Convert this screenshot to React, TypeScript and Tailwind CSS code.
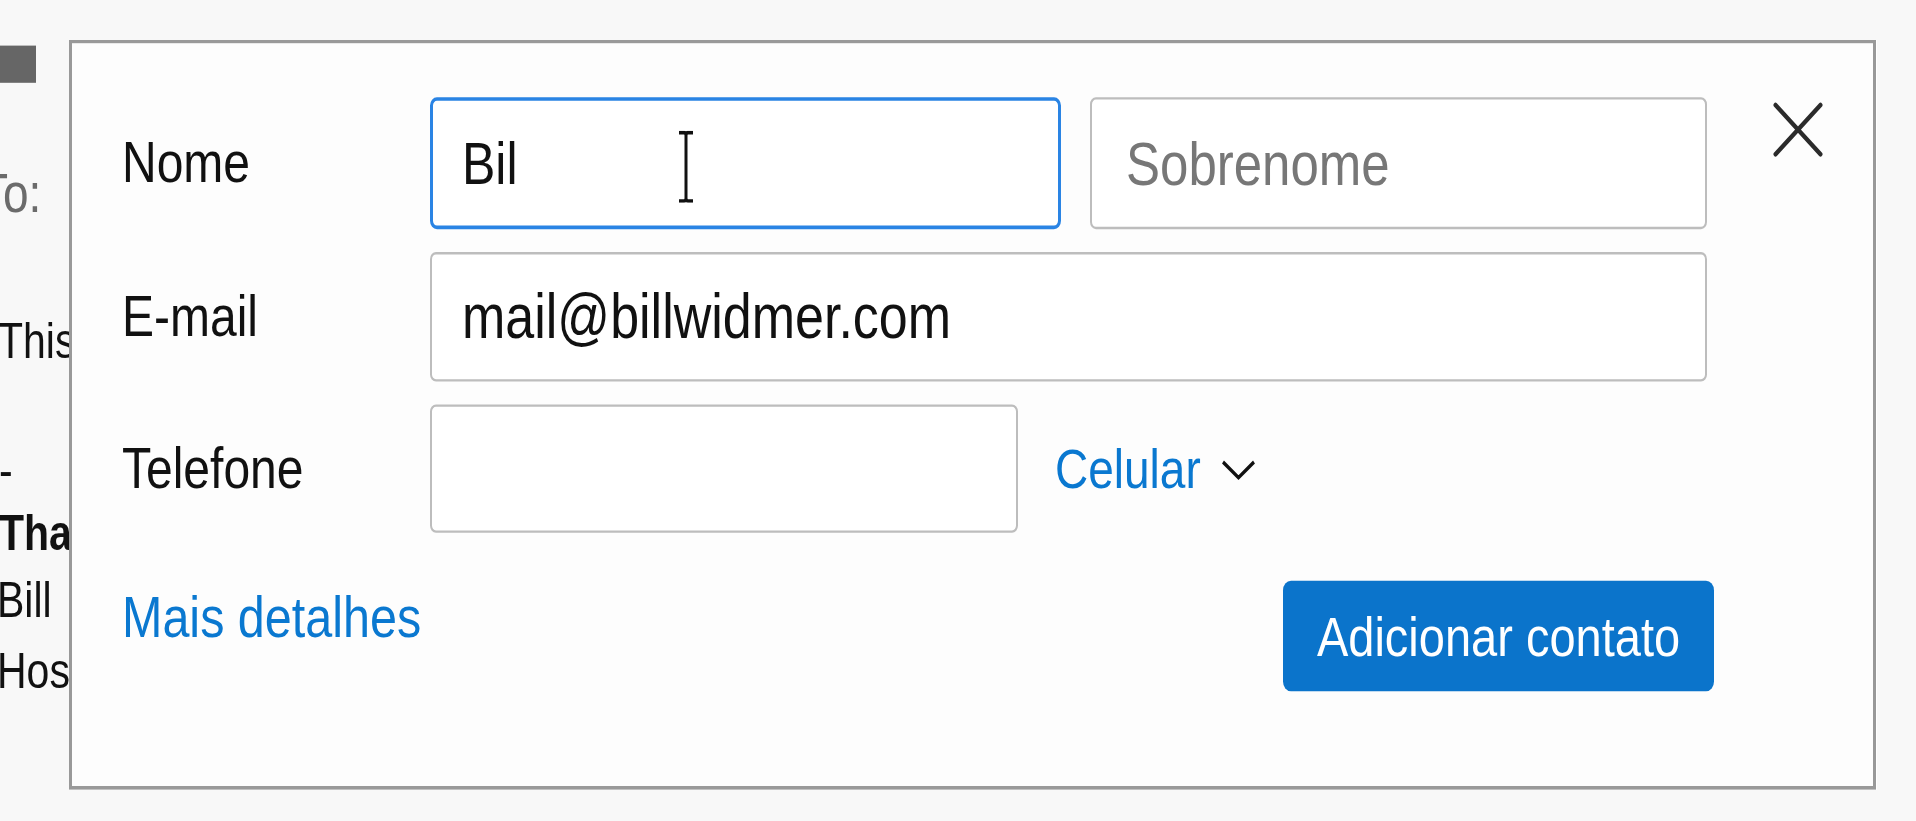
import React from "react";

// the reference is stretched vertically, so the page is laid out in "flat" units and scaled on Y
function CloseIcon() {
    return (
        <svg width="50" height="46" viewBox="0 0 50 46" fill="none">
            <path d="M2.5 2.5 L47.5 43.5 M47.5 2.5 L2.5 43.5" stroke="#2b2b2b" strokeWidth="4" strokeLinecap="round" />
        </svg>
    );
}

function Chevron() {
    return (
        <svg width="35" height="17" viewBox="0 0 35 17" fill="none">
            <polyline points="2,2 17.5,15 33,2" stroke="#111" strokeWidth="3" />
        </svg>
    );
}

function IBeam() {
    return (
        <svg width="16" height="60" viewBox="0 0 16 60" fill="none">
            <path d="M1 1.5 H6 Q8 1.5 8 4 V56 Q8 58.5 10 58.5 H15 M8 4 Q8 1.5 10 1.5 H15 M1 58.5 H6 Q8 58.5 8 56" stroke="#111" strokeWidth="3" />
        </svg>
    );
}

function Label({ children }: { children: React.ReactNode }) {
    return <div className="w-[308px] shrink-0 text-[48px] leading-none text-[#111]">{children}</div>;
}

export default function App() {
    return (
        <div className="w-[1916px] h-[821px] bg-[#f8f8f8] overflow-hidden">
            <div className="w-[1916px] h-[684px] origin-top-left scale-y-[1.2] flex font-['Liberation_Sans',Arial,sans-serif]">
                {/* mail body peeking out behind the popup */}
                <div className="w-[69px] shrink-0 overflow-hidden text-[41px] leading-[56px] text-[#111] whitespace-nowrap">
                    <div className="mt-[38px] w-[36px] h-[31px] bg-[#666]" />
                    <div className="mt-[64px] ml-[-20px] text-[46px] text-[#6b6b6b]">To:</div>
                    <div className="mt-[67px] ml-[-2px]">This is a test</div>
                    <div className="mt-[52px] ml-[-1px]">-</div>
                    <div className="mt-[-4px] ml-[-1px] font-bold">Thanks,</div>
                    <div className="ml-[-3px]">Bill</div>
                    <div className="mt-[3px] ml-[-3px]">Hostinger</div>
                </div>

                <div className="mt-[33px] w-[1807px] h-[625px] shrink-0 border-[3px] border-[#999] bg-[#fdfdfd] pt-[45px] pl-[50px] flex flex-col">
                    <div className="flex items-center h-[110px]">
                        <Label>Nome</Label>
                        <div className="relative w-[631px] h-full shrink-0">
                            <input
                                readOnly
                                defaultValue="Bil"
                                className="w-full h-full rounded-[7px] border-[3px] border-[#2a84e4] bg-white pl-[29px] text-[50px] text-[#111] outline-none"
                            />
                            <div className="absolute left-[248px] top-[28px] pointer-events-none">
                                <IBeam />
                            </div>
                        </div>
                        <input
                            readOnly
                            placeholder="Sobrenome"
                            className="ml-[29px] w-[617px] h-full shrink-0 rounded-[6px] border-2 border-[#bdbdbd] bg-white pl-[34px] text-[51px] text-[#111] placeholder:text-[#777] outline-none"
                        />
                        <button className="ml-[66px] self-start mt-[4px]">
                            <CloseIcon />
                        </button>
                    </div>

                    <div className="flex items-center h-[108px] mt-[19px]">
                        <Label>E-mail</Label>
                        <input
                            readOnly
                            defaultValue="mail@billwidmer.com"
                            className="w-[1277px] h-full shrink-0 rounded-[6px] border-2 border-[#bdbdbd] bg-white pl-[30px] text-[52px] text-[#111] outline-none"
                        />
                    </div>

                    <div className="flex items-center h-[107px] mt-[19px]">
                        <Label>Telefone</Label>
                        <input
                            readOnly
                            className="w-[588px] h-full shrink-0 rounded-[6px] border-2 border-[#bdbdbd] bg-white outline-none"
                        />
                        <span className="ml-[37px] text-[46px] leading-none text-[#0a78d0]">Celular</span>
                        <span className="ml-[20px] mt-[2px]">
                            <Chevron />
                        </span>
                    </div>

                    <div className="flex items-start mt-[40px]">
                        <div className="w-[1161px] shrink-0 mt-[6px] text-[48.5px] leading-none text-[#0a78d0]">Mais detalhes</div>
                        <button className="w-[431px] h-[92px] rounded-[8px] bg-[#0b74cb] text-white text-[47px] leading-none flex items-center justify-center">
                            Adicionar contato
                        </button>
                    </div>
                </div>
            </div>
        </div>
    );
}
